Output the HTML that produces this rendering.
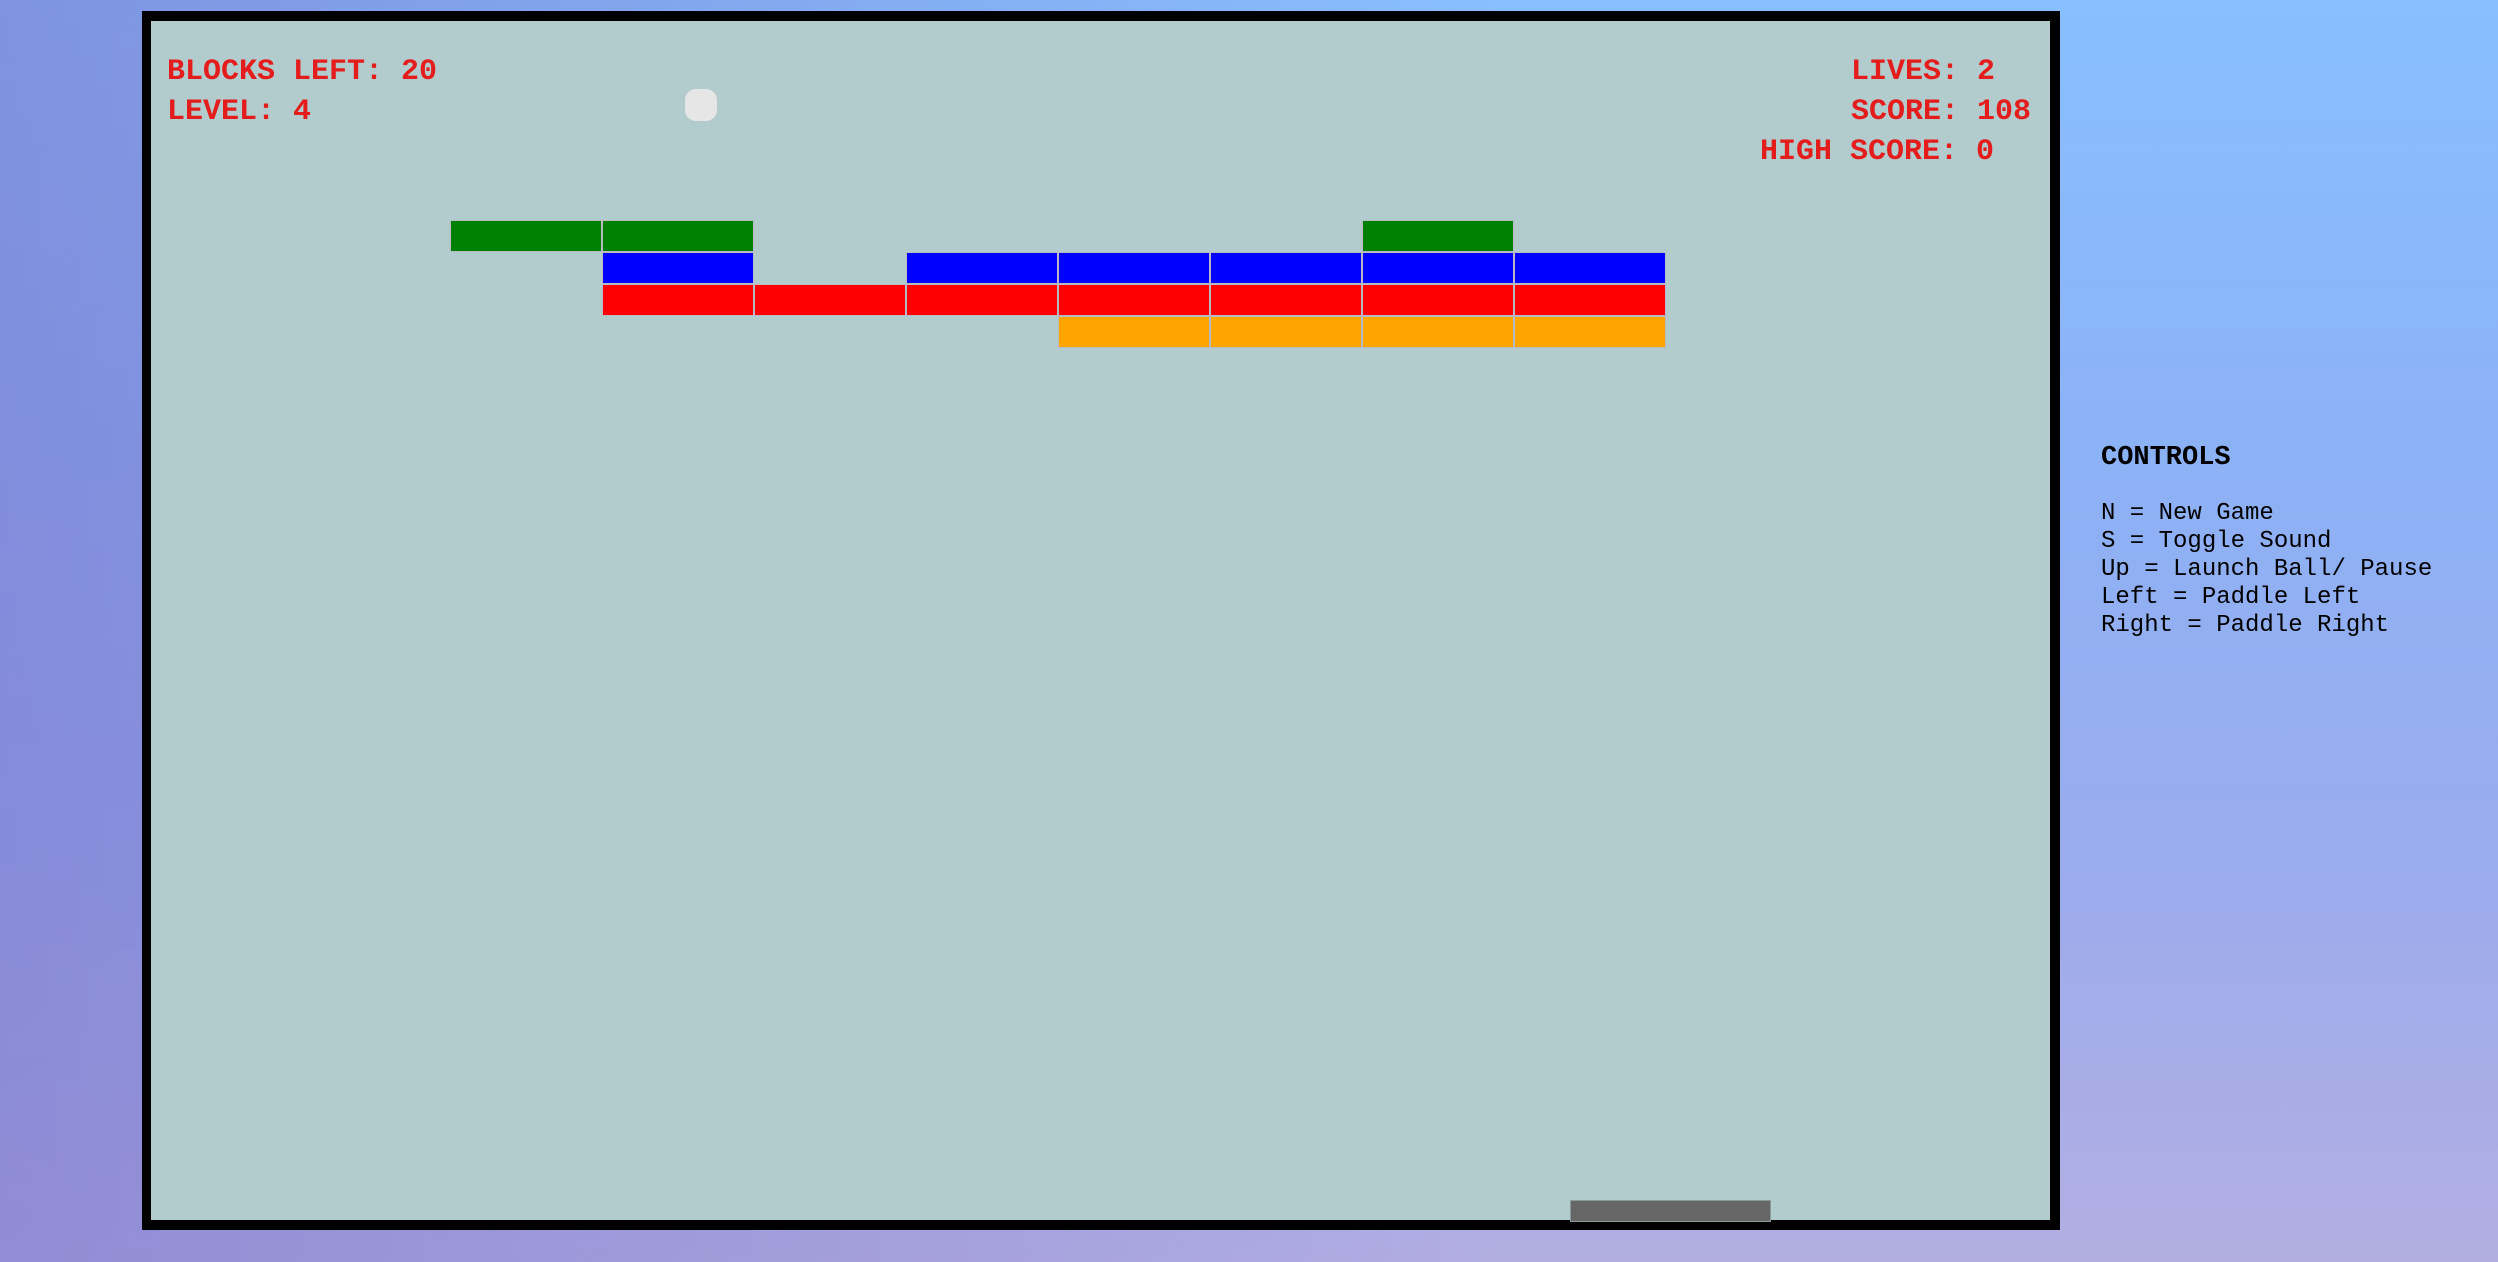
<!DOCTYPE html>
<html><head><meta charset="utf-8"><style>
html,body{margin:0;padding:0;width:2498px;height:1262px;overflow:hidden}
body{position:relative;background:
linear-gradient(to right, rgba(118,112,200,0.55) 0%, rgba(118,112,200,0.15) 45%, rgba(118,112,200,0) 60%),
linear-gradient(to bottom, #88bffe 0%, #8cb2f6 35%, #98acee 65%, #b2aee2 100%);}
#frame{position:absolute;left:142px;top:11px;width:1899px;height:1199px;border:10px solid #000;border-left-width:9px;background:#b2cccd;}
.b{position:absolute;width:150px;height:30px;box-shadow:0 0 0 1px #b9b9c4}
.g{background:#008000}.u{background:#0000ff}.r{background:#ff0000}.o{background:#ffa500}
.t{position:absolute;font-family:"Liberation Mono",monospace;font-weight:bold;color:#e41c1c;font-size:30px;line-height:30px;white-space:pre;letter-spacing:0px}
#ball{position:absolute;left:685px;top:89px;width:32px;height:32px;border-radius:11px;background:#e6e6e6}
#paddle{position:absolute;left:1571px;top:1201px;width:199px;height:20px;background:#666;box-shadow:0 0 0 1px #8a9a9a}
.c{position:absolute;left:2101px;font-family:"Liberation Mono",monospace;color:#000;font-size:24px;line-height:28px;white-space:pre}
</style></head><body>
<div id="frame"></div>
<div class="t" style="left:167px;top:57px">BLOCKS LEFT: 20</div>
<div class="t" style="left:167px;top:97px">LEVEL: 4</div>
<div class="t" style="left:1851px;top:57px">LIVES: 2</div>
<div class="t" style="left:1851px;top:97px">SCORE: 108</div>
<div class="t" style="left:1760px;top:137px">HIGH SCORE: 0</div>
<div id="ball"></div>

<div class="b g" style="left:451px;top:221px"></div>
<div class="b g" style="left:603px;top:221px"></div>
<div class="b g" style="left:1363px;top:221px"></div>

<div class="b u" style="left:603px;top:253px"></div>
<div class="b u" style="left:907px;top:253px"></div>
<div class="b u" style="left:1059px;top:253px"></div>
<div class="b u" style="left:1211px;top:253px"></div>
<div class="b u" style="left:1363px;top:253px"></div>
<div class="b u" style="left:1515px;top:253px"></div>

<div class="b r" style="left:603px;top:285px"></div>
<div class="b r" style="left:755px;top:285px"></div>
<div class="b r" style="left:907px;top:285px"></div>
<div class="b r" style="left:1059px;top:285px"></div>
<div class="b r" style="left:1211px;top:285px"></div>
<div class="b r" style="left:1363px;top:285px"></div>
<div class="b r" style="left:1515px;top:285px"></div>

<div class="b o" style="left:1059px;top:317px"></div>
<div class="b o" style="left:1211px;top:317px"></div>
<div class="b o" style="left:1363px;top:317px"></div>
<div class="b o" style="left:1515px;top:317px"></div>

<div id="paddle"></div>

<div class="c" style="top:444px;font-weight:bold;font-size:27px">CONTROLS</div>
<div class="c" style="top:500px">N = New Game
S = Toggle Sound
Up = Launch Ball/ Pause
Left = Paddle Left
Right = Paddle Right</div>
</body></html>
